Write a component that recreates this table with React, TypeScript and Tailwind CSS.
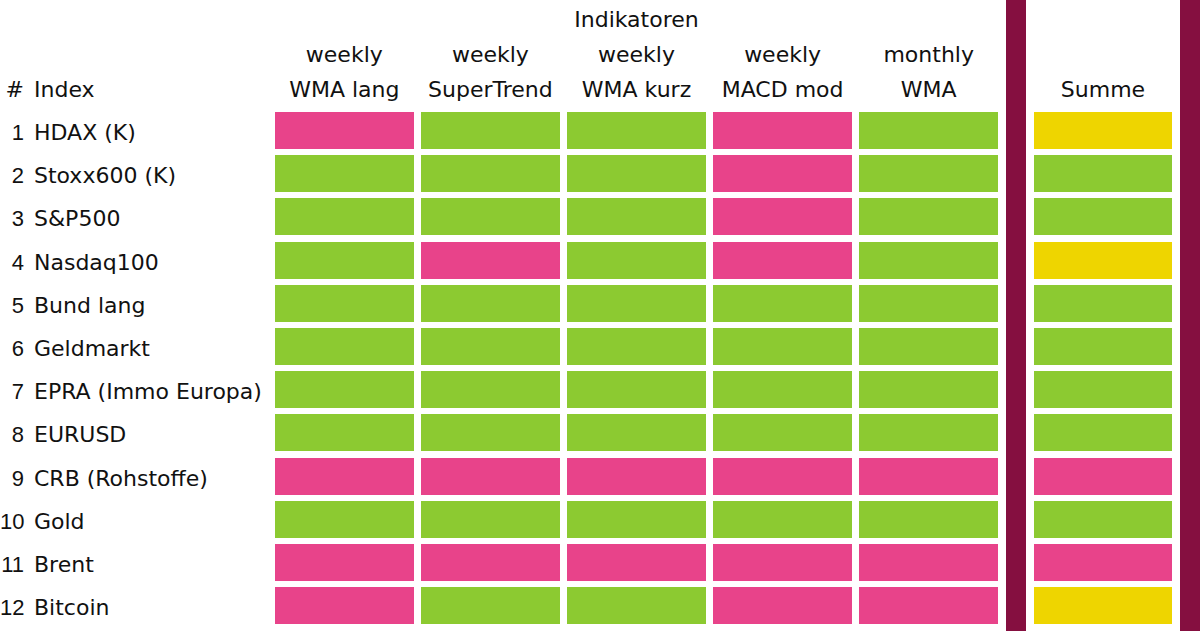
const P = "bg-[#e8438a]";
const G = "bg-[#8cca31]";
const Y = "bg-[#eed500]";

type Row = { n: number; name: string; cells: string[]; sum: string };

const rows: Row[] = [
  { n: 1, name: "HDAX (K)", cells: [P, G, G, P, G], sum: Y },
  { n: 2, name: "Stoxx600 (K)", cells: [G, G, G, P, G], sum: G },
  { n: 3, name: "S&P500", cells: [G, G, G, P, G], sum: G },
  { n: 4, name: "Nasdaq100", cells: [G, P, G, P, G], sum: Y },
  { n: 5, name: "Bund lang", cells: [G, G, G, G, G], sum: G },
  { n: 6, name: "Geldmarkt", cells: [G, G, G, G, G], sum: G },
  { n: 7, name: "EPRA (Immo Europa)", cells: [G, G, G, G, G], sum: G },
  { n: 8, name: "EURUSD", cells: [G, G, G, G, G], sum: G },
  { n: 9, name: "CRB (Rohstoffe)", cells: [P, P, P, P, P], sum: P },
  { n: 10, name: "Gold", cells: [G, G, G, G, G], sum: G },
  { n: 11, name: "Brent", cells: [P, P, P, P, P], sum: P },
  { n: 12, name: "Bitcoin", cells: [P, G, G, P, P], sum: Y },
];

const indicators = [
  ["weekly", "WMA lang"],
  ["weekly", "SuperTrend"],
  ["weekly", "WMA kurz"],
  ["weekly", "MACD mod"],
  ["monthly", "WMA"],
];

const App = () => {
  return (
    <div className="flex h-[631px] w-[1200px] overflow-hidden bg-white text-[22px] text-[#111] font-['DejaVu_Sans',sans-serif]">
      {/* left: labels + indicators */}
      <div className="w-[998px]">
        <div className="flex h-[112px] pt-[2px] leading-[35px]">
          <div className="flex w-[275px] items-end pb-[5px]">
            <span className="w-[24px] text-right">#</span>
            <span className="ml-[10px]">Index</span>
          </div>
          <div className="w-[723px]">
            <div className="text-center">Indikatoren</div>
            <div className="grid grid-cols-5 gap-x-[7.5px] text-center">
              {indicators.map((ind) => (
                <div key={ind[1]}>
                  <div>{ind[0]}</div>
                  <div>{ind[1]}</div>
                </div>
              ))}
            </div>
          </div>
        </div>
        <div className="flex flex-col gap-[6.2px]">
          {rows.map((row) => (
            <div key={row.n} className="flex h-[37px]">
              <div className="flex w-[275px] items-center pt-[4px]">
                <span className="w-[24px] text-right font-['Liberation_Sans',sans-serif]">
                  {row.n}
                </span>
                <span className="ml-[10px] whitespace-nowrap">{row.name}</span>
              </div>
              <div className="grid w-[723px] grid-cols-5 gap-x-[7.5px]">
                {row.cells.map((c, i) => (
                  <div key={i} className={c} />
                ))}
              </div>
            </div>
          ))}
        </div>
      </div>

      <div className="ml-[8px] h-full w-[20px] bg-[#850f40]" />

      {/* summe */}
      <div className="ml-[8px] w-[138px]">
        <div className="flex h-[112px] items-end justify-center pb-[5px] leading-[35px]">
          Summe
        </div>
        <div className="flex flex-col gap-[6.2px]">
          {rows.map((row) => (
            <div key={row.n} className={`h-[37px] ${row.sum}`} />
          ))}
        </div>
      </div>

      <div className="ml-[8px] h-full w-[20px] bg-[#850f40]" />
    </div>
  );
};

export default App;
